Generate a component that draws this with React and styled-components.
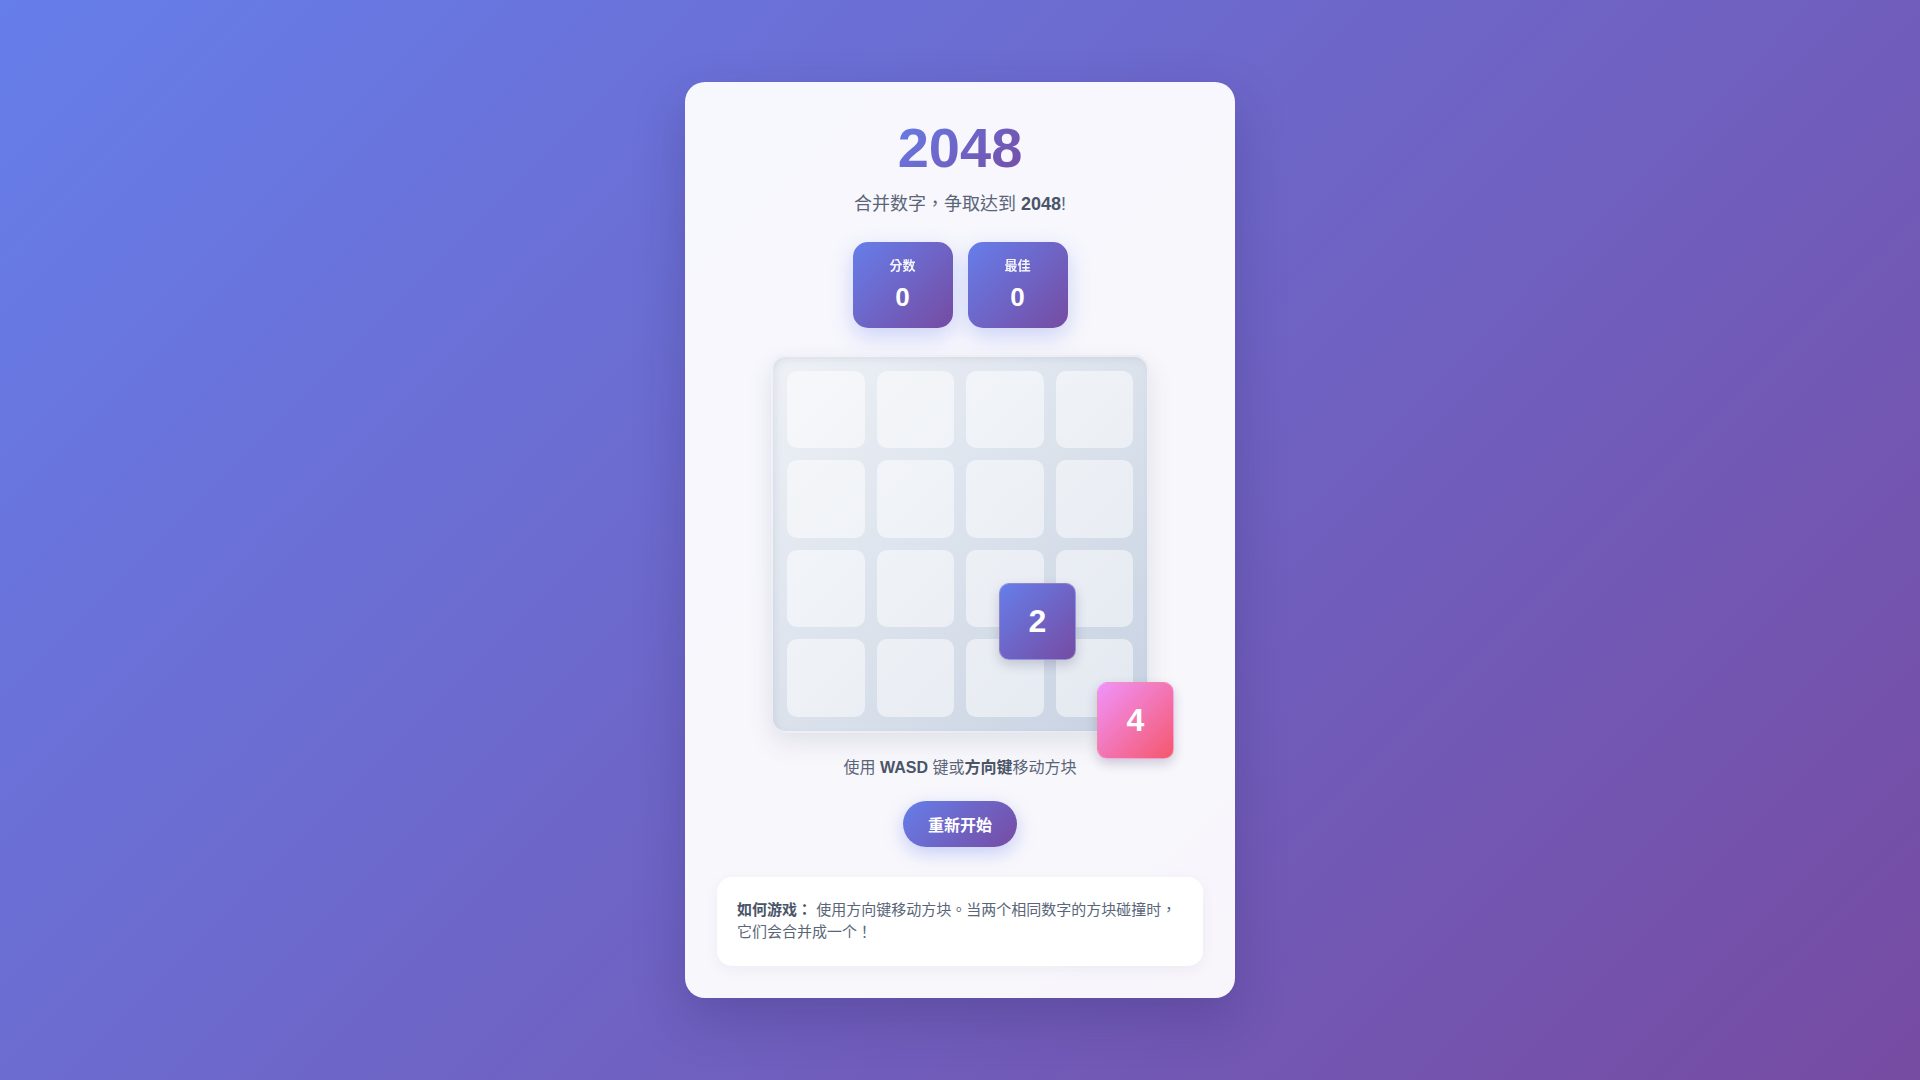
import styled, { createGlobalStyle } from "styled-components";

const GlobalStyle = createGlobalStyle`
  * {
    box-sizing: border-box;
  }

  body {
    margin: 0;
    min-height: 100vh;
    background: linear-gradient(135deg, #667eea 0%, #764ba2 100%);
    font-family: "Liberation Sans", "Noto Sans CJK TC", sans-serif;
  }
`;

const Page = styled.main`
  min-height: 100vh;
  display: flex;
  align-items: center;
  justify-content: center;
`;

const Card = styled.section`
  width: 550px;
  padding: 32px;
  background: rgba(255, 255, 255, 0.95);
  border-radius: 20px;
  box-shadow: 0 20px 50px rgba(40, 30, 90, 0.25);
  display: flex;
  flex-direction: column;
  align-items: center;
`;

const Title = styled.h1`
  margin: 0 0 9px;
  font-size: 56px;
  line-height: 1.2;
  font-weight: 700;
  letter-spacing: 0;
  background: linear-gradient(135deg, #667eea, #764ba2);
  -webkit-background-clip: text;
  background-clip: text;
  color: transparent;
`;

const Subtitle = styled.p`
  margin: 0;
  font-size: 18px;
  line-height: 27px;
  color: #5a6678;

  strong {
    color: #4a5568;
  }
`;

const Scores = styled.div`
  display: flex;
  gap: 15px;
  margin-top: 24px;
`;

const ScoreBox = styled.div`
  width: 100px;
  height: 86px;
  border-radius: 15px;
  background: linear-gradient(135deg, #667eea, #764ba2);
  box-shadow: 0 8px 22px rgba(102, 126, 234, 0.3);
  color: #fff;
  display: flex;
  flex-direction: column;
  align-items: center;
  justify-content: center;
  gap: 8px;
`;

const ScoreLabel = styled.span`
  font-size: 13px;
  line-height: 16px;
  font-weight: 700;
  opacity: 0.92;
`;

const ScoreValue = styled.span`
  font-size: 26px;
  line-height: 30px;
  font-weight: 700;
`;

const Board = styled.div`
  position: relative;
  margin-top: 27px;
  width: 378px;
  padding: 16px;
  border-radius: 15px;
  background: linear-gradient(135deg, #eef1f6 0%, #dbe2ec 50%, #c6d1e1 100%);
  box-shadow: 0 10px 24px rgba(60, 70, 100, 0.12),
    inset 0 0 0 2px rgba(255, 255, 255, 0.55),
    inset 3px 3px 8px rgba(120, 135, 165, 0.18);
  display: grid;
  grid-template-columns: repeat(4, 1fr);
  gap: 12px;
`;

const Cell = styled.div`
  aspect-ratio: 1;
  border-radius: 10px;
  background: rgba(255, 255, 255, 0.5);
`;

const Tile = styled.div`
  position: absolute;
  left: ${(p) => p.$x}px;
  top: ${(p) => p.$y}px;
  width: 77px;
  height: 77px;
  border-radius: 10px;
  background: ${(p) => p.$bg};
  border: 1px solid rgba(255, 255, 255, 0.25);
  box-shadow: 0 5px 12px rgba(40, 40, 80, 0.2);
  color: #fff;
  font-size: 32px;
  font-weight: 700;
  display: flex;
  align-items: center;
  justify-content: center;
`;

const Hint = styled.p`
  margin: 23px 0 0;
  font-size: 16px;
  line-height: 24px;
  color: #5a6678;

  strong {
    color: #4a5568;
  }
`;

const RestartButton = styled.button`
  margin-top: 21px;
  height: 46px;
  padding: 0 25px;
  border: none;
  border-radius: 23px;
  background: linear-gradient(135deg, #667eea, #764ba2);
  box-shadow: 0 6px 18px rgba(102, 126, 234, 0.35);
  color: #fff;
  font-family: inherit;
  font-size: 16px;
  font-weight: 700;
  cursor: pointer;
`;

const InfoBox = styled.div`
  margin-top: 30px;
  align-self: stretch;
  padding: 22px 20px;
  background: #fff;
  border-radius: 15px;
  box-shadow: 0 4px 14px rgba(60, 60, 110, 0.06);
  font-size: 15px;
  line-height: 22.5px;
  color: #5a6678;

  strong {
    color: #4a5568;
  }
`;

const tiles = [
  { value: 2, x: 228, y: 228, bg: "linear-gradient(135deg, #667eea, #764ba2)" },
  { value: 4, x: 326, y: 327, bg: "linear-gradient(135deg, #f093fb, #f5576c)" },
];

export default function App() {
  return (
    <>
      <GlobalStyle />
      <Page>
        <Card>
          <Title>2048</Title>
          <Subtitle>
            合并数字，争取达到 <strong>2048</strong>!
          </Subtitle>

          <Scores>
            <ScoreBox>
              <ScoreLabel>分数</ScoreLabel>
              <ScoreValue>0</ScoreValue>
            </ScoreBox>
            <ScoreBox>
              <ScoreLabel>最佳</ScoreLabel>
              <ScoreValue>0</ScoreValue>
            </ScoreBox>
          </Scores>

          <Board>
            {Array.from({ length: 16 }, (_, i) => (
              <Cell key={i} />
            ))}
            {tiles.map((t) => (
              <Tile key={t.value} $x={t.x} $y={t.y} $bg={t.bg}>
                {t.value}
              </Tile>
            ))}
          </Board>

          <Hint>
            使用 <strong>WASD</strong> 键或<strong>方向键</strong>移动方块
          </Hint>

          <RestartButton>重新开始</RestartButton>

          <InfoBox>
            <strong>如何游戏：</strong> 使用方向键移动方块。当两个相同数字的方块碰撞时，它们会合并成一个！
          </InfoBox>
        </Card>
      </Page>
    </>
  );
}
